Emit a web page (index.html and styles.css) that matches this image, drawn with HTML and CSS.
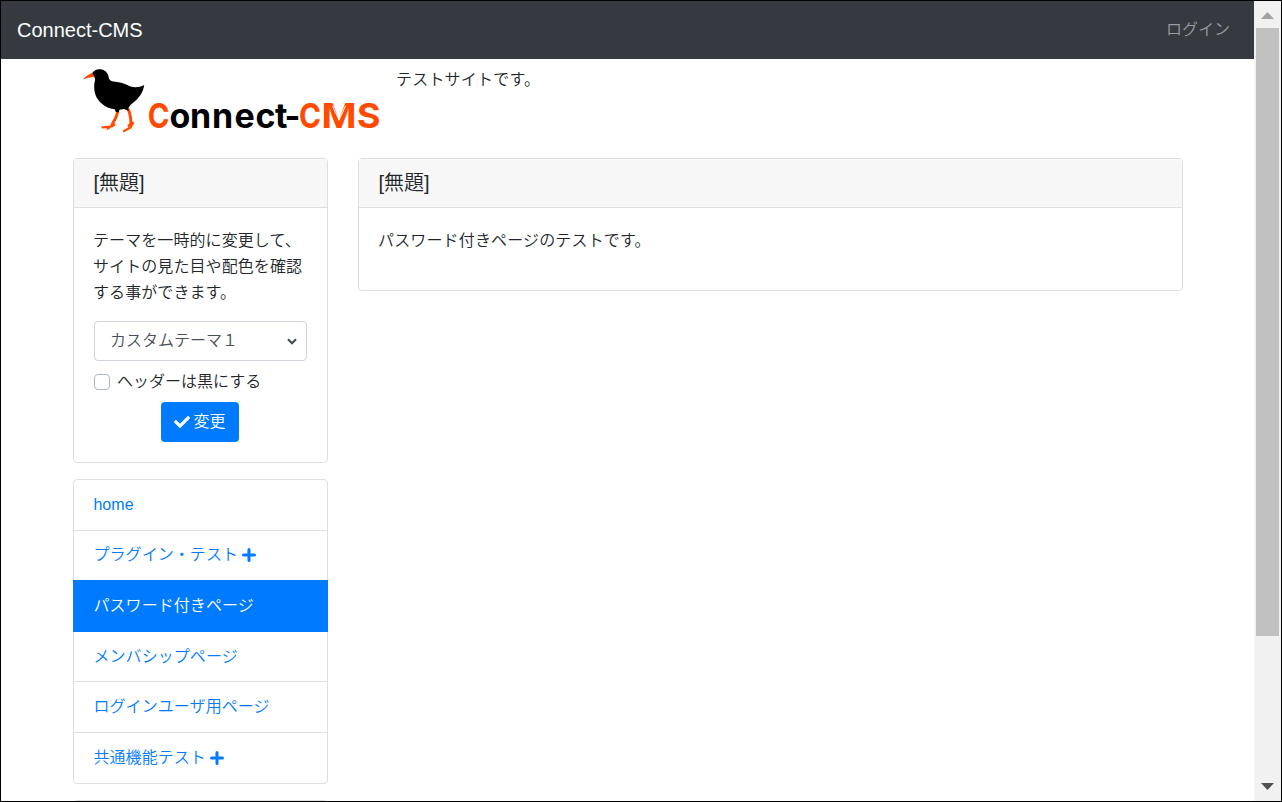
FILE: index.html
```html
<!DOCTYPE html>
<html lang="ja">
<head>
<meta charset="utf-8">
<title>Connect-CMS</title>
<link rel="stylesheet" href="styles.css">
</head>
<body>
<div class="window">
  <div class="page">
    <nav class="navbar">
      <a class="brand">Connect-CMS</a>
      <a class="login">ログイン</a>
    </nav>
    <header class="site-header container">
      <svg class="logo" width="308" height="75" viewBox="73 63 308 75">
        <g fill="none" stroke="#ff4b00" stroke-linecap="round" stroke-linejoin="round">
          <path d="M117.700 111C117.300 117 113.500 121 112 125" stroke-width="3"/>
          <path d="M102.500 127.300L111.500 126.500L114.500 124.800M111.500 126L107.700 128.700" stroke-width="2.200"/>
          <path d="M128.500 110C130.300 114 130.700 118.500 131 122.500" stroke-width="3"/>
          <path d="M133 122.700L130.500 127.500L124 131M131 123L128.500 126" stroke-width="2.200"/>
        </g>
        <path d="M83 79.200C86 76 89 74 93 72.800L94.500 77C90.500 77.400 86.500 78 83 79.200Z" fill="#ff4b00"/>
        <path d="M92.300 73C94 70 97 68.800 100.500 69.200C105 69.800 107.500 72.500 108.400 76C108.900 79 109.800 80.500 112 81.300C119 82 124 83.200 130 86.200C135 88 139.500 87.300 144.200 85C143.300 92 139.500 97.500 134.500 101.500C131.500 104.200 129.500 105.500 128.500 108L128.600 110.800L125.800 109.700L124.300 108.900L119.500 109.800L118.700 112.200L115.800 112L114.800 109.300C109 108.600 104.500 106.500 101 103C96 98 94.300 93.500 94.200 87C94.200 84 94.700 81 95.200 79.500C94.800 78.500 94.500 77.500 94.300 76.500Z"/>
        <g class="logo-type">
          <text class="accent" x="147.800" y="128" textLength="21.700" lengthAdjust="spacingAndGlyphs">C</text>
          <text x="169.500 190 212 234.500 255.500 275 284.500" y="128">onnect-</text>
          <text class="accent" x="299" y="128" textLength="22" lengthAdjust="spacingAndGlyphs">C</text>
          <text class="accent" x="321.500" y="128" textLength="35" lengthAdjust="spacingAndGlyphs">M</text>
          <text class="accent" x="357" y="128" textLength="23.500" lengthAdjust="spacingAndGlyphs">S</text>
        </g>
        <path d="M332.500 106L339 120L345.500 106" fill="none" stroke="#fff"/>
      </svg>
      <p class="site-note">テストサイトです。</p>
    </header>
    <div class="columns container">
      <aside class="sidebar">
        <section class="card theme-card">
          <h2 class="card-header">[無題]</h2>
          <div class="card-body">
            <p class="theme-text">テーマを一時的に変更して、サイトの見た目や配色を確認する事ができます。</p>
            <div class="select">
              <span>カスタムテーマ１</span>
              <svg width="10" height="7" viewBox="0 0 10 7"><path d="M1 1.200L5 5.200L9 1.200" fill="none" stroke="#454c53" stroke-width="2.200"/></svg>
            </div>
            <label class="check"><span class="box"></span>ヘッダーは黒にする</label>
            <div class="actions">
              <button class="button">
                <svg width="16" height="16" viewBox="0 0 512 512"><path fill="currentColor" d="M173.898 439.404l-166.400-166.400c-9.997-9.997-9.997-26.206 0-36.204l36.203-36.204c9.997-9.998 26.207-9.998 36.204 0L192 312.690 432.095 72.596c9.997-9.997 26.207-9.997 36.204 0l36.203 36.204c9.997 9.997 9.997 26.206 0 36.204l-294.400 294.401c-9.998 9.997-26.207 9.997-36.204-.001z"/></svg>
                <span>変更</span>
              </button>
            </div>
          </div>
        </section>
        <nav class="menu">
          <a class="item">home</a>
          <a class="item">プラグイン・テスト<svg class="plus" width="14" height="14" viewBox="0 0 14 14"><path d="M7 1.500V12.500M1.500 7H12.500" stroke="currentColor" stroke-width="3" stroke-linecap="round"/></svg></a>
          <a class="item active">パスワード付きページ</a>
          <a class="item">メンバシップページ</a>
          <a class="item">ログインユーザ用ページ</a>
          <a class="item">共通機能テスト<svg class="plus" width="14" height="14" viewBox="0 0 14 14"><path d="M7 1.500V12.500M1.500 7H12.500" stroke="currentColor" stroke-width="3" stroke-linecap="round"/></svg></a>
        </nav>
        <section class="card next-card"></section>
      </aside>
      <main class="main">
        <section class="card main-card">
          <h2 class="card-header">[無題]</h2>
          <div class="card-body">パスワード付きページのテストです。</div>
        </section>
      </main>
    </div>
  </div>
  <div class="scrollbar">
    <svg class="arrow" width="13" height="7" viewBox="0 0 13 7"><path d="M0 7L6.500 0L13 7Z" fill="#a3a3a3"/></svg>
    <div class="thumb"></div>
    <svg class="arrow down" width="13" height="7" viewBox="0 0 13 7"><path d="M0 0H13L6.500 7Z" fill="#505050"/></svg>
  </div>
</div>
</body>
</html>
```

FILE: styles.css
```css
* {
  box-sizing: border-box;
}

body {
  margin: 0;
  background: #fff;
  color: #212529;
  font: 16px/1.6 "Liberation Sans", "Noto Sans CJK JP", sans-serif;
  font-weight: 350;
}

.window {
  display: flex;
  width: 1282px;
  height: 802px;
  border: 1px solid #000;
  overflow: hidden;
}

.page {
  width: 1253px;
  overflow: hidden;
}

.navbar {
  display: flex;
  align-items: center;
  justify-content: space-between;
  height: 58px;
  padding: 0 24px 0 16px;
  background: #353a41;
}

.brand {
  color: #fff;
  font-size: 20px;
}

.login {
  color: #9a9c9f;
}

.container {
  width: 1140px;
  margin-left: 57px;
  padding: 0 15px;
}

.site-header {
  display: flex;
  gap: 15px;
  height: 99px;
  padding-top: 4px;
}

.logo {
  flex: none;
}

.logo-type {
  font-family: Inter, sans-serif;
  font-size: 34px;
  font-weight: 700;
}

.accent {
  fill: #ff4b00;
}

.site-note {
  margin: 4px 0 0;
  letter-spacing: 0.2px;
}

.columns {
  display: flex;
  gap: 30px;
  align-items: flex-start;
}

.sidebar {
  width: 255px;
}

.main {
  flex: 1;
}

.card {
  border: 1px solid #dfdfdf;
  border-radius: 4px;
}

.theme-card {
  height: 305px;
}

.main-card {
  height: 133px;
}

.main-card .card-body {
  letter-spacing: 0.15px;
}

.next-card {
  height: 100px;
  margin-top: 16px;
  background: #f7f7f7;
}

.card-header {
  height: 49px;
  margin: 0;
  padding: 0 19.500px;
  border-bottom: 1px solid #dfdfdf;
  background: #f7f7f7;
  font-size: 20px;
  font-weight: inherit;
  line-height: 48px;
}

.card-body {
  padding: 20px 20px 20px 19px;
}

.theme-text {
  margin: 0 0 15px;
  letter-spacing: 0.080px;
  line-height: 26px;
}

.select {
  display: flex;
  align-items: center;
  justify-content: space-between;
  height: 40px;
  margin-left: 1px;
  padding: 0 9px 0 15px;
  border: 1px solid #ced4da;
  border-radius: 4px;
  color: #495057;
}

.check {
  display: flex;
  align-items: center;
  gap: 7px;
  height: 26px;
  margin: 8px 0 0 1px;
}

.box {
  width: 16px;
  height: 16px;
  border: 1px solid #adb5bd;
  border-radius: 4px;
}

.actions {
  display: flex;
  justify-content: center;
  margin: 7px 1px 0 0;
}

.button {
  display: flex;
  align-items: center;
  gap: 4px;
  width: 78px;
  height: 40px;
  padding: 0 13px;
  border: 0;
  border-radius: 4px;
  background: #007bff;
  color: #fff;
  font: inherit;
}

.button svg {
  flex: none;
}

.menu {
  margin-top: 16px;
  border: 1px solid #dfdfdf;
  border-radius: 4px;
}

.item {
  display: flex;
  align-items: center;
  height: 50.500px;
  padding: 0 19.400px;
  border-bottom: 1px solid #dfdfdf;
  color: #007bff;
  letter-spacing: 0.080px;
}

.item:last-child {
  border-bottom: 0;
}

.active {
  height: 51.600px;
  margin: -1px -1px 0;
  padding: 0 20.400px;
  border-color: #007bff;
  background: #007bff;
  color: #fff;
}

.plus {
  margin-left: 4px;
}

.scrollbar {
  display: flex;
  flex-direction: column;
  align-items: center;
  width: 27px;
  padding: 11px 2px;
  background: #f1f1f1;
}

.thumb {
  width: 23px;
  height: 608px;
  margin-top: 9px;
  background: #c1c1c1;
}

.down {
  margin-top: auto;
}
```
